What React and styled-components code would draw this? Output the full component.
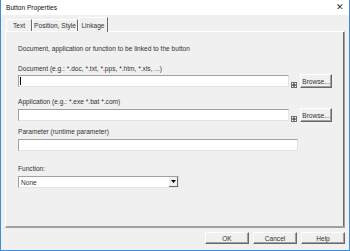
import styled, { createGlobalStyle } from "styled-components";

const Global = createGlobalStyle`
    body {
        margin: 0;
        font-family: "Liberation Sans", Arial, sans-serif;
        font-size: 6.6px;
        color: #000;
    }
`;

const Window = styled.div`
    width: 350px;
    height: 251px;
    box-sizing: border-box;
    border: 1px solid #3b8edb;
    border-top: none;
    background: #f0f0f0;
    display: flex;
    flex-direction: column;
`;

const TitleBar = styled.div`
    height: 15px;
    background: #fff;
    display: flex;
    align-items: center;
    justify-content: space-between;
    padding: 0 5px 0 5px;
    color: #111;
`;

const Close = styled.span`
    font-size: 9px;
    color: #333;
    line-height: 1;
`;

const Body = styled.div`
    flex: 1;
    display: flex;
    flex-direction: column;
    padding: 2px 4px 0 4px;
`;

const TabStrip = styled.div`
    display: flex;
    align-items: flex-end;
    height: 14px;
    padding-left: 1px;
    position: relative;
    z-index: 1;
`;

const Tab = styled.div`
    width: ${(p) => p.$w}px;
    height: ${(p) => (p.$active ? 15 : 12)}px;
    margin-bottom: ${(p) => (p.$active ? -1 : 0)}px;
    box-sizing: border-box;
    display: flex;
    align-items: center;
    justify-content: center;
    border-top: 1px solid #fff;
    border-left: 1px solid #fff;
    border-right: 1px solid #696969;
    background: #f0f0f0;
    color: #333;
    white-space: nowrap;
`;

const Panel = styled.div`
    height: 197px;
    box-sizing: border-box;
    border-top: 1px solid #fff;
    border-left: 1px solid #fff;
    border-right: 1px solid #a0a0a0;
    border-bottom: 2px solid #a0a0a0;
    box-shadow: inset -1px 0 0 #696969;
    padding: 0 12px;
    display: flex;
    flex-direction: column;
`;

const Text = styled.div`
    line-height: 9px;
    height: 9px;
    margin-top: ${(p) => p.$top}px;
    color: #333;
    white-space: nowrap;
`;

const Row = styled.div`
    display: flex;
    align-items: flex-end;
    margin-top: ${(p) => p.$top}px;
    height: 14px;
`;

const Field = styled.div`
    width: ${(p) => p.$w}px;
    height: 12px;
    box-sizing: border-box;
    background: #fff;
    border-top: 1px solid #a0a0a0;
    border-left: 1px solid #a0a0a0;
    border-right: 1px solid #e3e3e3;
    border-bottom: 1px solid #e3e3e3;
    margin-bottom: 1px;
    display: flex;
    align-items: center;
    padding-left: 1px;
`;

const Caret = styled.span`
    width: 1px;
    height: 8px;
    background: #000;
`;

const Expand = styled.div`
    width: 6px;
    height: 6px;
    box-sizing: border-box;
    border: 1px solid #707070;
    background: #fff;
    margin: 0 0 0 2px;
    display: flex;
    align-items: center;
    justify-content: center;
`;

const Button = styled.div`
    width: ${(p) => p.$w}px;
    height: ${(p) => p.$h}px;
    box-sizing: border-box;
    border-top: 1px solid #fff;
    border-left: 1px solid #fff;
    border-right: 1px solid #696969;
    border-bottom: 1px solid #696969;
    box-shadow: inset -1px -1px 0 #a0a0a0;
    background: #f0f0f0;
    display: flex;
    align-items: center;
    justify-content: center;
    color: #333;
    margin-left: ${(p) => p.$ml || 0}px;
`;

const Select = styled.div`
    margin-top: 3px;
    width: 161px;
    height: 12px;
    box-sizing: border-box;
    background: #fff;
    border-top: 1px solid #a0a0a0;
    border-left: 1px solid #a0a0a0;
    border-right: 1px solid #e3e3e3;
    border-bottom: 1px solid #e3e3e3;
    display: flex;
    align-items: center;
    justify-content: space-between;
    padding-left: 2px;
    color: #333;
`;

const Arrow = styled.div`
    width: 9px;
    height: 10px;
    box-sizing: border-box;
    background: #f0f0f0;
    border-right: 1px solid #696969;
    border-bottom: 1px solid #696969;
    display: flex;
    align-items: center;
    justify-content: center;
`;

const Footer = styled.div`
    display: flex;
    justify-content: flex-end;
    padding: 4px 0 0 0;
`;

function PlusBox() {
    return (
        <Expand>
            <svg width="4" height="4" viewBox="0 0 4 4">
                <path d="M2 0v4M0 2h4" stroke="#222" strokeWidth="1" />
            </svg>
        </Expand>
    );
}

function BrowseRow({ top, caret }) {
    return (
        <Row $top={top}>
            <Field $w={280}>{caret && <Caret />}</Field>
            <PlusBox />
            <Button $w={33} $h={14} $ml={3}>Browse...</Button>
        </Row>
    );
}

export default function App() {
    return (
        <Window>
            <Global />
            <TitleBar>
                <span>Button Properties</span>
                <Close>✕</Close>
            </TitleBar>
            <Body>
                <TabStrip>
                    <Tab $w={26}>Text</Tab>
                    <Tab $w={46}>Position, Style</Tab>
                    <Tab $w={30} $active>Linkage</Tab>
                </TabStrip>
                <Panel>
                    <Text $top={12}>Document, application or function to be linked to the button</Text>
                    <Text $top={11}>Document (e.g.: *.doc, *.txt, *.pps, *.htm, *.xls, ...)</Text>
                    <BrowseRow top={1} caret />
                    <Text $top={9}>Application (e.g.: *.exe *.bat *.com)</Text>
                    <BrowseRow top={2} />
                    <Text $top={5}>Parameter (runtime parameter)</Text>
                    <Row $top={2}>
                        <Field $w={280} />
                    </Row>
                    <Text $top={12}>Function:</Text>
                    <Select>
                        <span>None</span>
                        <Arrow>
                            <svg width="5" height="3" viewBox="0 0 5 3">
                                <path d="M0 0h5L2.5 3z" fill="#000" />
                            </svg>
                        </Arrow>
                    </Select>
                </Panel>
                <Footer>
                    <Button $w={44} $h={12}>OK</Button>
                    <Button $w={44} $h={12} $ml={4}>Cancel</Button>
                    <Button $w={44} $h={12} $ml={4}>Help</Button>
                </Footer>
            </Body>
        </Window>
    );
}
